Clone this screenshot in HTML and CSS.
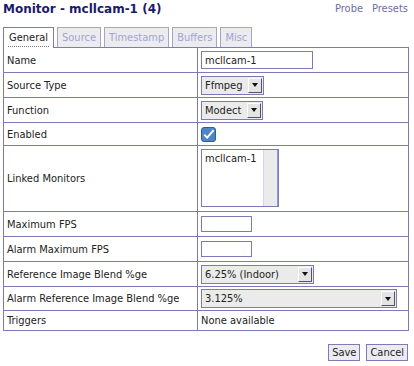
FILE: index.html
```html
<!DOCTYPE html>
<html>
<head>
<meta charset="utf-8">
<link rel="stylesheet" href="styles.css">
</head>
<body>
<div class="header">
  <h2 class="title">Monitor - mcllcam-1 (4)</h2>
  <div class="links"><a href="#">Probe</a><a href="#">Presets</a></div>
</div>
<ul class="tabs">
  <li class="tab active"><span class="focus">General</span></li>
  <li class="tab">Source</li>
  <li class="tab">Timestamp</li>
  <li class="tab">Buffers</li>
  <li class="tab">Misc</li>
</ul>
<table class="form">
  <tr class="r25"><td class="lbl">Name</td><td class="val"><span class="text w112">mcllcam-1</span></td></tr>
  <tr class="r25"><td class="lbl">Source Type</td><td class="val"><span class="sel w63"><span class="opt">Ffmpeg</span><span class="arr"><i></i></span></span></td></tr>
  <tr class="r25"><td class="lbl">Function</td><td class="val"><span class="sel w62"><span class="opt">Modect</span><span class="arr"><i></i></span></span></td></tr>
  <tr class="r23"><td class="lbl">Enabled</td><td class="val"><span class="check"><svg width="15" height="15" viewBox="0 0 15 15"><rect x="0.5" y="0.5" width="14" height="14" rx="2.5" fill="#4f86c6" stroke="#2d5f9e"/><path d="M3.2 7.6 L6.2 10.6 L12.6 3.2" fill="none" stroke="#fff" stroke-width="2"/></svg></span></td></tr>
  <tr class="r66"><td class="lbl">Linked Monitors</td><td class="val top"><span class="list"><span class="litem">mcllcam-1</span><span class="lscroll"></span></span></td></tr>
  <tr class="r25"><td class="lbl">Maximum FPS</td><td class="val"><span class="text w51"></span></td></tr>
  <tr class="r25"><td class="lbl">Alarm Maximum FPS</td><td class="val"><span class="text w51"></span></td></tr>
  <tr class="r25"><td class="lbl">Reference Image Blend %ge</td><td class="val"><span class="sel w113"><span class="opt">6.25% (Indoor)</span><span class="arr"><i></i></span></span></td></tr>
  <tr class="r24"><td class="lbl">Alarm Reference Image Blend %ge</td><td class="val"><span class="sel w196"><span class="opt">3.125%</span><span class="arr"><i></i></span></span></td></tr>
  <tr class="r20"><td class="lbl">Triggers</td><td class="val">None available</td></tr>
</table>
<div class="buttons">
  <button class="btn">Save</button>
  <button class="btn">Cancel</button>
</div>
</body>
</html>
```

FILE: styles.css
```css
* { box-sizing: border-box; }
body {
  margin: 0;
  padding: 0 5px 0 3px;
  font-family: "DejaVu Sans Condensed", "DejaVu Sans", Verdana, sans-serif;
  font-size: 11px;
  color: #222;
  background: #fff;
}
.header {
  display: flex;
  justify-content: space-between;
  align-items: flex-start;
  height: 27px;
}
.title {
  margin: 0;
  padding-top: 2px;
  font-family: "DejaVu Sans", Verdana, sans-serif;
  font-size: 12px;
  font-weight: bold;
  color: #1b1b6b;
}
.links {
  display: flex;
  gap: 9px;
  padding-top: 2px;
  padding-right: 1px;
}
.links a {
  color: #6e6ea6;
  text-decoration: none;
}
.tabs {
  list-style: none;
  margin: 0;
  padding: 0;
  display: flex;
  gap: 3px;
  height: 20px;
  position: relative;
  z-index: 1;
}
.tab {
  border: 1px solid #a7a3cf;
  border-bottom: none;
  background: #ececf0;
  color: #a3a3c8;
  padding: 3px 4px 0;
  height: 20px;
}
.tab.active {
  background: #fff;
  color: #222;
  border-color: #7e79b9;
  height: 21px;
  padding: 3px 4px 0;
}
.focus {
  display: inline-block;
  padding: 0 1px 2px;
  border-bottom: 1px dotted #777;
}
.form {
  border-collapse: collapse;
  width: 406px;
}
.form td {
  border: 1px solid #7e79b9;
  padding: 0 3px;
  vertical-align: middle;
  white-space: nowrap;
}
.form td.lbl { width: 194px; }
.form td.top { vertical-align: top; padding-top: 3px; }
.r25 { height: 25px; }
.r24 { height: 24px; }
.r23 { height: 23px; }
.r20 { height: 20px; }
.r66 { height: 66px; }
.val { line-height: 13px; }
.text {
  display: block;
  height: 18px;
  border: 1px solid #7e79b9;
  padding: 2px 3px;
  background: #fff;
}
.w112 { width: 112px; }
.w51 { width: 51px; height: 16px; }
.sel {
  display: flex;
  align-items: stretch;
  height: 19px;
  border: 1px solid #7e79b9;
  background: #ebebeb;
}
.w63 { width: 63px; }
.w62 { width: 62px; }
.w113 { width: 113px; }
.w196 { width: 196px; }
.opt {
  flex: 1;
  padding: 2px 3px 0;
}
.arr {
  width: 14px;
  margin: 1px 1px 1px 0;
  background: #e4e4e4;
  border-right: 1px solid #555;
  border-bottom: 1px solid #555;
  border-top: 1px solid #fff;
  border-left: 1px solid #fff;
  display: flex;
  align-items: center;
  justify-content: center;
}
.arr i {
  width: 0;
  height: 0;
  border-left: 3px solid transparent;
  border-right: 3px solid transparent;
  border-top: 4px solid #111;
}
.check { display: block; height: 15px; }
.check svg { display: block; }
.list {
  display: flex;
  width: 78px;
  height: 58px;
  border: 1px solid #7e79b9;
  background: #fff;
}
.litem {
  flex: 1;
  padding: 2px 3px;
}
.lscroll {
  width: 15px;
  background: #ebebeb;
  border-left: 1px solid #cfd6ec;
  border-right: 1px solid #8f9ad0;
}
.buttons {
  display: flex;
  justify-content: flex-end;
  gap: 6px;
  margin-top: 13px;
  padding-right: 1px;
}
.btn {
  font-family: "DejaVu Sans Condensed", "DejaVu Sans", Verdana, sans-serif;
  font-size: 11px;
  color: #222;
  background: #ececf0;
  border: 1px solid #7e79b9;
  height: 17px;
  padding: 0 3px;
  line-height: 13px;
}
```
